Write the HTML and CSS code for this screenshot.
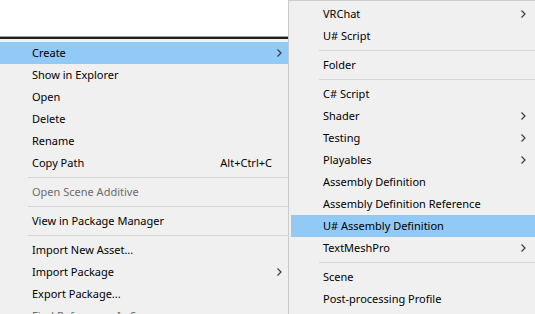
FILE: index.html
```html
<!DOCTYPE html>
<html lang="en">
<head>
    <meta charset="UTF-8">
    <title>Create menu</title>
    <link rel="stylesheet" href="styles.css">
</head>
<body>
    <div class="screen">
        <div class="panel"></div>

        <div class="menu menu-main">
            <div class="item active"><span class="label">Create</span><span class="arrow"><svg width="5" height="8" viewBox="0 0 5 8"><polyline points="0.5,0.5 4,4 0.5,7.5"/></svg></span></div>
            <div class="item"><span class="label">Show in Explorer</span></div>
            <div class="item"><span class="label">Open</span></div>
            <div class="item"><span class="label">Delete</span></div>
            <div class="item"><span class="label">Rename</span></div>
            <div class="item"><span class="label">Copy Path</span><span class="shortcut">Alt+Ctrl+C</span></div>
            <div class="sep"></div>
            <div class="item disabled"><span class="label">Open Scene Additive</span></div>
            <div class="sep"></div>
            <div class="item"><span class="label">View in Package Manager</span></div>
            <div class="sep"></div>
            <div class="item"><span class="label">Import New Asset...</span></div>
            <div class="item"><span class="label">Import Package</span><span class="arrow"><svg width="5" height="8" viewBox="0 0 5 8"><polyline points="0.5,0.5 4,4 0.5,7.5"/></svg></span></div>
            <div class="item"><span class="label">Export Package...</span></div>
            <div class="item disabled"><span class="label">Find References In Scene</span></div>
            <div class="item"><span class="label">Select Dependencies</span></div>
        </div>

        <div class="menu menu-sub">
            <div class="item"><span class="label">VRChat</span><span class="arrow"><svg width="5" height="8" viewBox="0 0 5 8"><polyline points="0.5,0.5 4,4 0.5,7.5"/></svg></span></div>
            <div class="item"><span class="label">U# Script</span></div>
            <div class="sep"></div>
            <div class="item"><span class="label">Folder</span></div>
            <div class="sep"></div>
            <div class="item"><span class="label">C# Script</span></div>
            <div class="item"><span class="label">Shader</span><span class="arrow"><svg width="5" height="8" viewBox="0 0 5 8"><polyline points="0.5,0.5 4,4 0.5,7.5"/></svg></span></div>
            <div class="item"><span class="label">Testing</span><span class="arrow"><svg width="5" height="8" viewBox="0 0 5 8"><polyline points="0.5,0.5 4,4 0.5,7.5"/></svg></span></div>
            <div class="item"><span class="label">Playables</span><span class="arrow"><svg width="5" height="8" viewBox="0 0 5 8"><polyline points="0.5,0.5 4,4 0.5,7.5"/></svg></span></div>
            <div class="item"><span class="label">Assembly Definition</span></div>
            <div class="item"><span class="label">Assembly Definition Reference</span></div>
            <div class="item active"><span class="label">U# Assembly Definition</span></div>
            <div class="item"><span class="label">TextMeshPro</span><span class="arrow"><svg width="5" height="8" viewBox="0 0 5 8"><polyline points="0.5,0.5 4,4 0.5,7.5"/></svg></span></div>
            <div class="sep"></div>
            <div class="item"><span class="label">Scene</span></div>
            <div class="item"><span class="label">Post-processing Profile</span></div>
            <div class="item"><span class="label">Prefab Variant</span></div>
        </div>
    </div>
</body>
</html>
```

FILE: styles.css
```css
body {
    margin: 0;
    padding: 0;
    background: #f0f0f0;
    font-family: 'Segoe UI', 'Noto Sans', sans-serif;
    font-size: 11px;
    color: #000000;
}

.screen {
    position: relative;
    width: 535px;
    height: 314px;
    overflow: hidden;
    background: #f0f0f0;
}

.panel {
    height: 36px;
    background: #ffffff;
    border-bottom: 1px solid #a0a0a0;
}

.menu {
    background: #f0f0f0;
}

.menu-main {
    width: 290px;
    border-top: 2px solid #1e1e1e;
    padding: 3px 0;
}

/* submenu sits over the main menu */
.menu-sub {
    position: absolute;
    top: 0;
    left: 288px;
    width: 244px;
    padding: 2px;
    border: 1px solid #cccccc;
}

.item {
    box-sizing: border-box;
    display: grid;
    grid-template-columns: 1fr auto 5px;
    column-gap: 5px;
    align-items: center;
    height: 22px;
    padding: 0 8px 1px 32px;
    white-space: nowrap;
}

.menu-sub .item {
    padding-right: 9px;
}

.item.active {
    background: #91c9f7;
}

.item.disabled {
    color: #6d6d6d;
}

.label {
    grid-column: 1;
}

.shortcut {
    grid-column: 2;
    text-align: right;
}

.arrow {
    grid-column: 3;
    display: flex;
    align-items: center;
}

.arrow svg {
    fill: none;
    stroke: #3c3c3c;
    stroke-width: 1.2;
}

.sep {
    height: 1px;
    margin: 3px 0 3px 28px;
    background: #d7d7d7;
}
```
